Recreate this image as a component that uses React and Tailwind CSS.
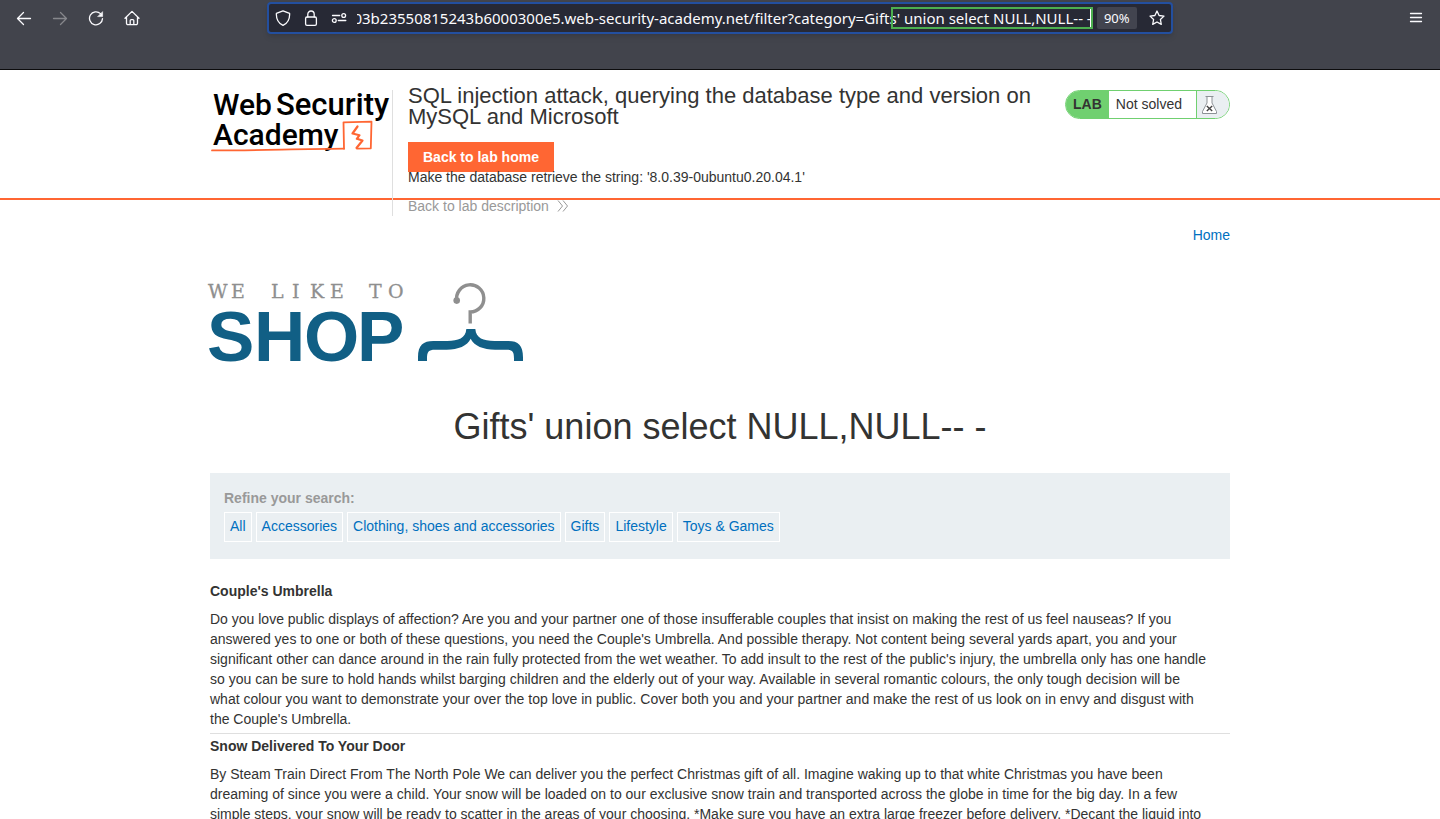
import { useEffect, useRef } from "react";

const ADDRESS =
  "03b23550815243b6000300e5.web-security-academy.net/filter?category=Gifts' union select NULL,NULL-- -";

const CATEGORIES = ["All", "Accessories", "Clothing, shoes and accessories", "Gifts", "Lifestyle", "Toys & Games"];

const PRODUCTS = [
  {
    name: "Couple's Umbrella",
    text: "Do you love public displays of affection? Are you and your partner one of those insufferable couples that insist on making the rest of us feel nauseas? If you answered yes to one or both of these questions, you need the Couple's Umbrella. And possible therapy. Not content being several yards apart, you and your significant other can dance around in the rain fully protected from the wet weather. To add insult to the rest of the public's injury, the umbrella only has one handle so you can be sure to hold hands whilst barging children and the elderly out of your way. Available in several romantic colours, the only tough decision will be what colour you want to demonstrate your over the top love in public. Cover both you and your partner and make the rest of us look on in envy and disgust with the Couple's Umbrella.",
  },
  {
    name: "Snow Delivered To Your Door",
    text: "By Steam Train Direct From The North Pole We can deliver you the perfect Christmas gift of all. Imagine waking up to that white Christmas you have been dreaming of since you were a child. Your snow will be loaded on to our exclusive snow train and transported across the globe in time for the big day. In a few simple steps, your snow will be ready to scatter in the areas of your choosing. *Make sure you have an extra large freezer before delivery. *Decant the liquid into",
  },
];

function Icon({ children }) {
  return (
    <svg
      viewBox="0 0 16 16"
      className="size-4 shrink-0"
      fill="none"
      stroke="currentColor"
      strokeWidth="1.3"
      strokeLinecap="round"
      strokeLinejoin="round"
      aria-hidden="true"
    >
      {children}
    </svg>
  );
}

function BrowserBar() {
  const input = useRef(null);
  useEffect(() => {
    input.current.scrollLeft = input.current.scrollWidth;
  }, []);

  return (
    <div className="h-[70px] shrink-0 border-b border-[#0c0c0d] bg-[#42444c] text-[#fbfbfe]">
      <div className="grid h-9 grid-cols-[13fr_44fr_13fr] items-center">
        <div className="flex items-center gap-5 pl-4">
          <button type="button" aria-label="Back">
            <Icon><path d="M14.5 8.5H1.5M7.5 2.5l-6 6 6 6" /></Icon>
          </button>
          <button type="button" aria-label="Forward" disabled className="text-[#86878c]">
            <Icon><path d="M1.5 8.5h13M8.5 2.5l6 6-6 6" /></Icon>
          </button>
          <button type="button" aria-label="Reload">
            <Icon>
              <path d="M12.5 3.6A6.5 6.5 0 1 0 14.5 8.6" />
              <path d="M14.6 2v4.6H10z" fill="currentColor" strokeWidth="0.6" />
            </Icon>
          </button>
          <button type="button" aria-label="Home">
            <Icon>
              <path d="M1 8.2 8 1.4l7 6.8M2.5 7v6.2a1.4 1.4 0 0 0 1.4 1.4h8.2a1.4 1.4 0 0 0 1.4-1.4V7" />
              <path d="M6.2 14.4V10.6a1 1 0 0 1 1-1h1.6a1 1 0 0 1 1 1v3.8" />
            </Icon>
          </button>
        </div>

        <div className="flex h-8 min-w-0 items-center rounded border-2 border-[#234f9f] bg-[#272935] px-[6px] shadow-md">
          <div className="flex shrink-0 items-center gap-3">
            <Icon><path d="M8 .9 14.6 3.3c.3 5-.9 9.300-6.600 12.100C2.300 12.600 1.100 8.300 1.400 3.300z" /></Icon>
            <Icon>
              <rect x="2.6" y="7" width="10.8" height="8.3" rx="1.4" />
              <path d="M4.800 7V4.200a3.200 3.200 0 0 1 6.400 0V7" />
            </Icon>
            <Icon>
              <circle cx="12.7" cy="5.5" r="1.9" />
              <path d="M1.500 5.500h7.200M7.300 10.500h7.500" />
              <circle cx="3.3" cy="10.5" r="1.9" />
            </Icon>
          </div>
          <div className="relative ml-2.5 min-w-0 flex-1">
            <input
              ref={input}
              aria-label="Address"
              defaultValue={ADDRESS}
              className="block h-6 w-full bg-transparent text-right font-['Noto_Sans',sans-serif] text-[15px] outline-none"
            />
            <span className="pointer-events-none absolute inset-y-px -right-px w-[202px] border-2 border-[#4caf50]" />
            <span className="pointer-events-none absolute inset-y-[3px] right-px w-px bg-white" />
          </div>
          <button
            type="button"
            className="ml-[5px] h-[22px] rounded-xs bg-[#42444f] px-[7px] font-['Noto_Sans',sans-serif] text-[13px] leading-[22px]"
          >
            90%
          </button>
          <button type="button" aria-label="Bookmark" className="ml-3">
            <Icon>
              <path d="M8 1l2.100 4.500 4.900.6-3.600 3.400.9 4.900L8 12l-4.300 2.400.9-4.900L1 6.100l4.900-.6z" />
            </Icon>
          </button>
        </div>

        <div className="flex justify-end pr-4">
          <button type="button" aria-label="Menu">
            <Icon><path d="M2.500 3.500h11M2.500 7.500h11M2.500 11.500h11" /></Icon>
          </button>
        </div>
      </div>
    </div>
  );
}

function AcademyLogo() {
  return (
    <svg viewBox="210 88 182 66" className="h-[66px] w-[182px] overflow-visible" role="img" aria-label="Web Security Academy">
      <g fontFamily="Roboto, sans-serif" fontWeight="500" fontSize="31" fill="#000">
        <text x="213" y="115" fontSize="30">Web</text>
        <text x="276" y="115">Security</text>
        <text x="213" y="145" fontSize="30">Academy</text>
      </g>
      <g fill="none" stroke="#ff6633" strokeLinejoin="round" strokeLinecap="round">
        <path d="M212 150.400C250 150.600 290 149.200 344 148.700" strokeWidth="1.8" />
        <path d="M344 148.700 343.500 122.300 371.500 121.600 370.800 148.300 357 148.600" strokeWidth="1.8" />
        <path d="M357.500 126.500 352.500 133.500 359.500 135.200 356.800 138.800 362.500 140.500 356.500 148" strokeWidth="2.2" />
      </g>
    </svg>
  );
}

function ShopLogo() {
  return (
    <svg viewBox="210 283 314 80" className="mt-[38px] h-20 w-[314px] overflow-visible" role="img" aria-label="We like to shop">
      <text
        x="208 231 271 292 310 330 369 388"
        y="298"
        fontFamily="'DejaVu Serif', serif"
        fontSize="19"
        fill="#8f8f8f"
        stroke="#8f8f8f"
        strokeWidth="0.3"
      >
        WELIKETO
      </text>
      <text
        x="207 254 304 357"
        y="361"
        fontFamily="'Liberation Sans', Arial, sans-serif"
        fontWeight="700"
        fontSize="71"
        fill="#115f85"
      >
        SHOP
      </text>
      <circle cx="456.7" cy="300.6" r="3.3" fill="#8f8f8f" />
      <path
        d="M456.800 300.500A13.600 13.600 0 1 1 470.200 312V323.500"
        fill="none"
        stroke="#8f8f8f"
        strokeWidth="3.4"
      />
      <g transform="translate(200 270) scale(0.33333)" fill="#115f85">
        <path d="M654 273V262C654 225 670 213 700 213H742C775 212 797 205 799 177H826C828 205 850 212 883 213H925C955 213 969 226 969 262V273H942V266C942 244 937 239 918 239H885C850 238 822 228 812 206C802 228 775 238 740 239H705C686 239 681 244 681 266V273Z" />
      </g>
    </svg>
  );
}

function LabBadge() {
  return (
    <div className="mt-[5px] flex h-[29px] shrink-0 items-stretch overflow-hidden rounded-full border border-[#70d070] leading-[27px]">
      <strong className="bg-[#70d070] px-[7px]">LAB</strong>
      <span className="border-r border-[#70d070] pr-[14px] pl-[7px]">Not solved</span>
      <span className="flex w-8 items-center bg-[#eaeff2] pl-1">
        <svg viewBox="0 0 17 20" className="h-5 w-[17px]" fill="none" stroke="#8c9196" aria-hidden="true">
          <path d="M4.500 1.500h8M6 1.500v6.500L1.500 16.500V18.500H15.500V16.500L11 8V1.500" fill="#fff" />
          <path d="M5.800 11l5.400 5M11.200 11l-5.400 5" stroke="#444" strokeWidth="1.4" />
        </svg>
      </span>
    </div>
  );
}

function LabHeader() {
  return (
    <header className="h-[130px] border-b-2 border-[#ff6633]">
      <div className="mx-auto flex max-w-[1020px] items-start pt-[15px]">
        <div className="mt-[5px] h-[126px] shrink-0 border-r border-[#dfdfdf]">
          <a href="#academy" className="-mt-0.5 block">
            <AcademyLogo />
          </a>
        </div>
        <div className="min-w-0 flex-1 pr-6 pl-[15px]">
          <h2 className="text-[22px] leading-[21px]">
            SQL injection attack, querying the database type and version on MySQL and Microsoft
          </h2>
          <a
            href="#lab-home"
            className="mt-[15px] inline-block h-[30px] bg-[#ff6633] px-[15px] align-top leading-[30px] font-bold text-white"
          >
            Back to lab home
          </a>
          <p className="relative -mt-[5px]">Make the database retrieve the string: '8.0.39-0ubuntu0.20.04.1'</p>
          <a href="#description" className="mt-[9px] flex items-center gap-2 text-[#999999]">
            Back to lab description
            <svg viewBox="0 0 12 12" className="size-3" fill="none" stroke="currentColor" aria-hidden="true">
              <path d="M1 .5 5.500 6 1 11.500M6 .5 10.500 6 6 11.500" />
            </svg>
          </a>
        </div>
        <LabBadge />
      </div>
    </header>
  );
}

export default function App() {
  return (
    <div className="flex h-screen flex-col overflow-hidden bg-white">
      <BrowserBar />
      <div className="min-h-0 flex-1 overflow-hidden font-['Liberation_Sans',Arial,sans-serif] text-[14px] leading-5 text-[#333332]">
        <LabHeader />
        <main className="mx-auto max-w-[1020px] pt-[25px]">
          <nav className="flex justify-end text-[#0070bf]">
            <a href="#home">Home</a>
          </nav>
          <ShopLogo />
          <h1 className="mt-11 text-center text-[36px] leading-10">Gifts' union select NULL,NULL-- -</h1>
          <section className="mt-[26px] bg-[#eaeff2] px-[14px] pt-[15px] pb-[17px]">
            <h2 className="font-bold text-[#999999]">Refine your search:</h2>
            <div className="mt-1 flex flex-wrap gap-1">
              {CATEGORIES.map((name) => (
                <a key={name} href="#filter" className="h-[30px] border border-white px-[5px] leading-[27px] text-[#0070bf]">
                  {name}
                </a>
              ))}
            </div>
          </section>
          <div className="mt-5 divide-y divide-[#dfdfdf]">
            {PRODUCTS.map((product) => (
              <article key={product.name} className="pt-0.5 pb-1">
                <h3 className="font-bold">{product.name}</h3>
                <p className="mt-2 pr-6">{product.text}</p>
              </article>
            ))}
          </div>
        </main>
      </div>
    </div>
  );
}
